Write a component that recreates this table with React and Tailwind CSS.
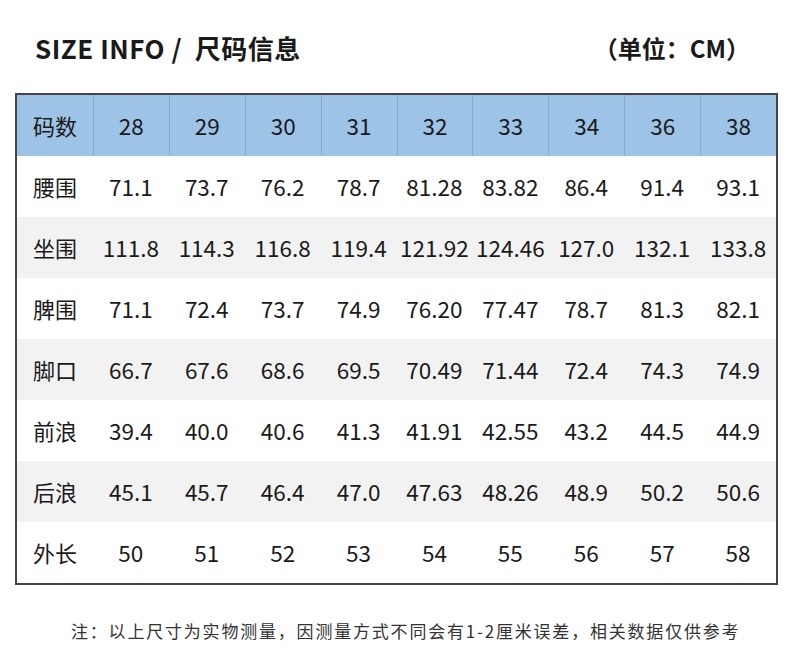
import React from "react";

const header = ["码数", "28", "29", "30", "31", "32", "33", "34", "36", "38"];
const rows = [
  ["腰围", "71.1", "73.7", "76.2", "78.7", "81.28", "83.82", "86.4", "91.4", "93.1"],
  ["坐围", "111.8", "114.3", "116.8", "119.4", "121.92", "124.46", "127.0", "132.1", "133.8"],
  ["脾围", "71.1", "72.4", "73.7", "74.9", "76.20", "77.47", "78.7", "81.3", "82.1"],
  ["脚口", "66.7", "67.6", "68.6", "69.5", "70.49", "71.44", "72.4", "74.3", "74.9"],
  ["前浪", "39.4", "40.0", "40.6", "41.3", "41.91", "42.55", "43.2", "44.5", "44.9"],
  ["后浪", "45.1", "45.7", "46.4", "47.0", "47.63", "48.26", "48.9", "50.2", "50.6"],
  ["外长", "50", "51", "52", "53", "54", "55", "56", "57", "58"],
];

const font = { fontFamily: '"Noto Sans CJK SC", "Noto Sans", sans-serif' };

function Cell({ value, first, header }) {
  return (
    <div
      className={`flex items-center justify-center whitespace-nowrap ${first ? "text-[22px]" : "text-[22.5px]"} ${
        header && !first ? "border-l border-[#86a9cc]" : ""
      }`}
    >
      {value}
    </div>
  );
}

export default function App() {
  return (
    <div className="w-[790px] h-[665px] bg-white text-[#1a1a1a]" style={font}>
      <div className="flex justify-between items-center pt-[32px] pl-[35px] pr-[40px]">
        <div className="text-[26px] leading-[32px] font-bold tracking-[0.5px]">SIZE INFO /&nbsp; 尺码信息</div>
        <div className="text-[24px] leading-[32px] font-bold">（单位：CM）</div>
      </div>
      <div className="mt-[29px] ml-[15px] w-[763px] border-2 border-[#444444]">
        <div className="grid grid-cols-10 h-[61px] bg-[#9dc3e6]">
          {header.map((h, i) => (
            <Cell key={i} value={h} first={i === 0} header />
          ))}
        </div>
        {rows.map((r, ri) => (
          <div key={ri} className={`grid grid-cols-10 h-[61px] ${ri % 2 === 1 ? "bg-[#f2f2f2]" : "bg-white"}`}>
            {r.map((c, ci) => (
              <Cell key={ci} value={c} first={ci === 0} />
            ))}
          </div>
        ))}
      </div>
      <div className="mt-[34px] pl-[71px] text-[17px] leading-[24px] tracking-[1.8px] text-[#333333]">
        注：以上尺寸为实物测量，因测量方式不同会有1-2厘米误差，相关数据仅供参考
      </div>
    </div>
  );
}
